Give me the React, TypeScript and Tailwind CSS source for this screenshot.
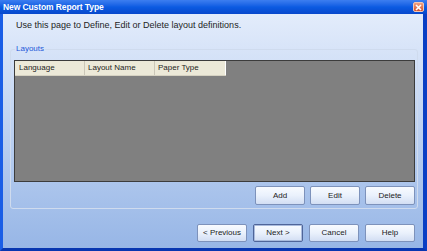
import React from "react";

const font = { fontFamily: '"Liberation Sans", Arial, sans-serif' };

function Btn({ label, def }: { label: string; def?: boolean }) {
  return (
    <div
      className={`w-[50px] flex items-center justify-center rounded-[2px] text-[8px] text-[#1b1b1b] bg-gradient-to-b from-[#f8fbff] via-[#eaf1fc] to-[#d2def3] ${
        def ? "border border-[#4f6599] shadow-[inset_0_0_0_1px_#a9bbdd]" : "border border-[#7d92bb]"
      }`}
    >
      {label}
    </div>
  );
}

export default function App() {
  return (
    <div className="w-[427px] h-[251px] flex flex-col bg-[#0b45d0] overflow-hidden" style={font}>
      <div className="h-[14px] shrink-0 flex items-center justify-between pl-[3px] pr-[3px] bg-gradient-to-b from-[#3c7ef0] via-[#0b5be2] to-[#0848cc]">
        <span className="text-white font-bold text-[8.5px] leading-none tracking-[-0.1px]">New Custom Report Type</span>
        <div className="w-[11px] h-[10px] rounded-[2px] bg-gradient-to-b from-[#f0a080] to-[#d4502a] border border-[#f4c8b4] flex items-center justify-center">
          <svg width="7" height="7" viewBox="0 0 7 7">
            <path d="M1 1L6 6M6 1L1 6" stroke="white" strokeWidth="1.6" />
          </svg>
        </div>
      </div>
      <div className="flex-1 flex flex-col border-l-[3px] border-r-[4px] border-b-[3px] border-l-[#1a5ee6] border-r-[#0a3fc4] border-b-[#0836b0] bg-gradient-to-b from-[#e3ecfb] to-[#97b6e6]">
        <div className="shrink-0 pl-[13px] pt-[5px] h-[31px] text-[9px] leading-[12px] text-[#1e1e1e]">
          Use this page to Define, Edit or Delete layout definitions.
        </div>
        <fieldset className="m-0 ml-[7px] mr-[5px] border border-[#cfdbee] rounded-[3px] pl-[3px] pr-[2px] pb-[3px] pt-0 flex flex-col min-w-0">
          <legend className="ml-[1px] px-[1px] text-[8px] text-[#2458d8] leading-[8px] h-[8px]">Layouts</legend>
          <div className="mt-[7px] h-[122px] bg-[#808080] border border-[#3c3c3c]">
            <div className="flex h-[15px] w-[211px] bg-[#ece9d8] border-b border-[#d6d2c2] text-[8px] text-[#1e1e1e]">
              <div className="w-[70px] flex items-center pl-[4px] border-r border-[#cbc7b8]">Language</div>
              <div className="w-[70px] flex items-center pl-[3px] border-r border-[#cbc7b8]">Layout Name</div>
              <div className="w-[71px] flex items-center pl-[3px] border-r border-[#fff]">Paper Type</div>
            </div>
          </div>
          <div className="flex justify-end gap-[5px] mt-[4px] h-[19px]">
            <Btn label="Add" />
            <Btn label="Edit" />
            <Btn label="Delete" />
          </div>
        </fieldset>
        <div className="flex justify-end gap-[6px] mt-[15px] mr-[8px] h-[18px]">
          <Btn label="< Previous" />
          <Btn label="Next >" def />
          <Btn label="Cancel" />
          <Btn label="Help" />
        </div>
      </div>
    </div>
  );
}
